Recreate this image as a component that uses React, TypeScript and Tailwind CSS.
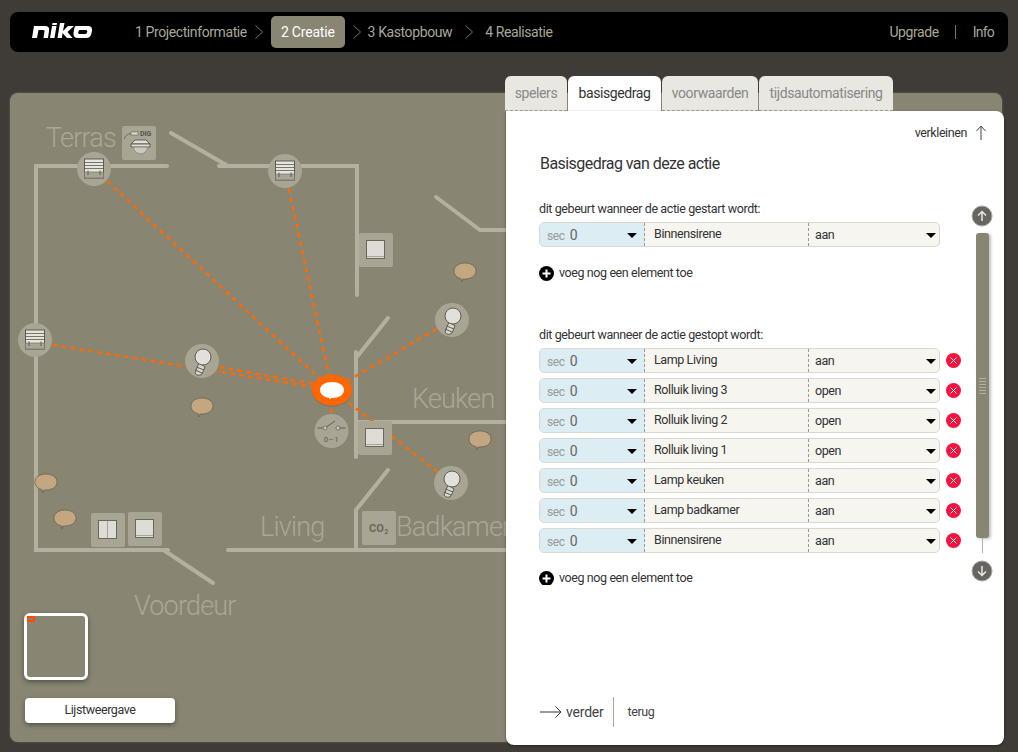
const FONT = "font-['Roboto',sans-serif]";

const WALLS = [
  "M36 350V166H167",
  "M171 133L228 166",
  "M219 166H357V295",
  "M36 340V550H168",
  "M165 551L213 583",
  "M356 457V352",
  "M356 358L388 318",
  "M356 422H506",
  "M356 550V510L388 470",
  "M228 550H506",
  "M436 197L480 230H506",
];

const LINKS = [
  [94, 169, 332, 390],
  [285, 171, 332, 390],
  [35, 342, 332, 390],
  [202, 364, 332, 387],
  [452, 320, 332, 390],
  [331, 431, 332, 390],
  [452, 483, 332, 390],
];

const BUBBLES = [
  [465, 271],
  [202, 406],
  [46, 482],
  [65, 518],
  [480, 439],
];

const LABELS = [
  { text: "Terras", cls: "left-[36px] top-[27px]" },
  { text: "Keuken", cls: "left-[402px] top-[288px]" },
  { text: "Living", cls: "left-[250px] top-[416px]" },
  { text: "Badkamer", cls: "left-[386px] top-[416px]" },
  { text: "Voordeur", cls: "left-[124px] top-[495px]" },
];

const STOP_ROWS = [
  ["Lamp Living", "aan"],
  ["Rolluik living 3", "open"],
  ["Rolluik living 2", "open"],
  ["Rolluik living 1", "open"],
  ["Lamp keuken", "aan"],
  ["Lamp badkamer", "aan"],
  ["Binnensirene", "aan"],
];

function Shutter({ x, y }: { x: number; y: number }) {
  return (
    <g transform={`translate(${x} ${y})`}>
      <circle r="17" fill="#a8a595" />
      <rect x="-9.5" y="-10" width="19" height="19" fill="#e6e4de" stroke="#5f5c50" />
      <rect x="-9.5" y="3" width="19" height="6" fill="#a8a595" stroke="#77746a" strokeWidth="0.7" />
      <path d="M-9 -6.5H9M-9 -3.5H9M-9 -0.5H9" stroke="#77746a" />
      <path d="M-6 1.5V6M6 1.5V6" stroke="#5f5c50" />
    </g>
  );
}

function Bulb({ x, y }: { x: number; y: number }) {
  return (
    <g transform={`translate(${x} ${y})`}>
      <circle r="17" fill="#a8a595" />
      <path d="M-3 2L-7 12Q-4 16 0 13L3 6Z" fill="#d9d7d0" stroke="#5f5c50" />
      <path d="M-5.5 6L2 9M-7 9L0 12" stroke="#5f5c50" />
      <circle cx="1" cy="-4" r="8" fill="#e2e0da" stroke="#5f5c50" />
    </g>
  );
}

function Tile({ x, y, split, children }: { x: number; y: number; split?: boolean; children?: React.ReactNode }) {
  return (
    <g transform={`translate(${x} ${y})`}>
      <rect width="34" height="34" rx="2" fill="#a8a595" />
      {children ?? (
        <>
          <rect x="7.5" y="7.5" width="18" height="18" fill="#dedcd6" stroke="#6a675b" />
          {split ? (
            <path d="M16.5 8V25" stroke="#a8a595" />
          ) : (
            <path d="M8 23.5H25" stroke="#a8a595" />
          )}
        </>
      )}
    </g>
  );
}

function Bubble({ x, y }: { x: number; y: number }) {
  return (
    <g transform={`translate(${x} ${y})`}>
      <path
        d="M-11 0C-11 -5 -6 -8 0 -8C6 -8 11 -5 11 0C11 5 6 8 0 8L-2 8L-3 11L-4 7.5C-8 7 -11 4 -11 0Z"
        fill="#c4a781"
        stroke="#6b6352"
        strokeWidth="0.8"
      />
    </g>
  );
}

function FloorPlan() {
  return (
    <svg className="absolute left-0 top-0" width="992" height="649" viewBox="10 93 992 649">
      <g fill="none" stroke="#b3b09f" strokeWidth="4" strokeLinecap="round">
        {WALLS.map((d) => (
          <path key={d} d={d} />
        ))}
      </g>
      <g stroke="#ff6a00" strokeWidth="2.500" strokeDasharray="4.5 4.5">
        {LINKS.map(([x1, y1, x2, y2]) => (
          <line key={`${x1}-${y1}`} x1={x1} y1={y1} x2={x2} y2={y2} />
        ))}
      </g>
      <Shutter x={94} y={169} />
      <Shutter x={285} y={171} />
      <Shutter x={35} y={340} />
      <Bulb x={202} y={361} />
      <Bulb x={452} y={320} />
      <Bulb x={451} y={483} />
      <Tile x={122} y={126}>
        <path d="M2 13Q4 8 9 7.500" fill="none" stroke="#5f5c50" strokeWidth="0.8" />
        <rect x="9" y="6" width="7" height="3" fill="#dedcd6" stroke="#5f5c50" strokeWidth="0.6" />
        <text x="18" y="10" fontSize="7" fontWeight="700" letterSpacing="0" fill="#55524a" fontFamily="Roboto, sans-serif">
          DIG
        </text>
        <path d="M9 18L13 14H24L28 18Z" fill="#e2e0da" stroke="#5f5c50" />
        <path d="M9 18H28V21H9Z" fill="#e2e0da" stroke="#5f5c50" />
        <path d="M11.500 21A7 7 0 0 0 25.500 21Z" fill="#c9c7bf" stroke="#908d80" />
      </Tile>
      <Tile x={359} y={233} />
      <Tile x={358} y={421} />
      <Tile x={91} y={513} split />
      <Tile x={128} y={512} />
      <Tile x={362} y={511}>
        <text x="7" y="21" fontSize="11" fontWeight="700" letterSpacing="0" fill="#6a675b" fontFamily="Roboto, sans-serif">
          CO
        </text>
        <text x="22.500" y="23" fontSize="6.500" fontWeight="700" letterSpacing="0" fill="#6a675b" fontFamily="Roboto, sans-serif">
          2
        </text>
      </Tile>
      <g transform="translate(331.500 431)">
        <circle r="17" fill="#a8a595" />
        <path d="M-14 -3H-8M8 -3H14M-6 -3.500L3.500 -10" stroke="#5f5c50" />
        <circle cx="-6.500" cy="-3" r="2" fill="#c9c7bf" stroke="#5f5c50" strokeWidth="0.7" />
        <circle cx="6.500" cy="-3" r="2" fill="#c9c7bf" stroke="#5f5c50" strokeWidth="0.7" />
        <text x="0" y="11" textAnchor="middle" fontSize="8" letterSpacing="0.5" fill="#5f5c50" fontFamily="Roboto, sans-serif">
          0–1
        </text>
      </g>
      {BUBBLES.map(([x, y]) => (
        <Bubble key={`${x}-${y}`} x={x} y={y} />
      ))}
      <g transform="translate(332 390)">
        <ellipse cy="1" rx="20" ry="15.500" fill="#6b5a40" opacity="0.4" />
        <ellipse rx="20" ry="15.500" fill="#ff6600" />
        <path
          d="M-12 0C-12 -5 -7 -8 0 -8C7 -8 12 -5 12 0C12 5 7 8 0 8L-1 8L-2 9.500L-3 7.800C-8 7.500 -12 4 -12 0Z"
          fill="#fff"
        />
      </g>
    </svg>
  );
}

function Caret() {
  return <span className="h-0 w-0 border-x-[5px] border-t-[5px] border-x-transparent border-t-black" />;
}

function ActionRow({ name, state, remove }: { name: string; state: string; remove?: boolean }) {
  return (
    <div className="flex items-center gap-[6px]">
      <div className="flex h-[25px] w-[401px] overflow-hidden rounded-[5px] border border-[#d9d8d0] bg-[#f6f5f0]">
        <div className="flex w-[105px] shrink-0 items-center border-r border-dashed border-r-[#9a9a90] bg-[#dcedf3] px-[7px] pt-[2px]">
          <span className="text-[12px] text-[#9a9a98]">sec</span>
          <span className="ml-[5px] text-[14px] text-[#666]">0</span>
          <span className="ml-auto flex">
            <Caret />
          </span>
        </div>
        <div className="flex w-[164px] shrink-0 items-start border-r border-dashed border-r-[#9a9a90] pl-[9px] pt-[2px] text-[12.500px] leading-[17px] text-[#333]">
          {name}
        </div>
        <div className="flex flex-1 items-center pl-[6px] pr-[3px] pt-[2px] text-[12.500px] text-[#333]">
          {state}
          <span className="ml-auto flex">
            <Caret />
          </span>
        </div>
      </div>
      {remove && (
        <svg width="15" height="15" viewBox="0 0 15 15">
          <circle cx="7.500" cy="7.500" r="7.500" fill="#f5123c" />
          <path d="M4.500 4.500L10.500 10.500M10.500 4.500L4.500 10.500" stroke="#fff" />
        </svg>
      )}
    </div>
  );
}

function AddRow() {
  return (
    <div className="flex items-center gap-[5px] text-[12.500px] leading-[16px] text-[#333]">
      <svg width="15" height="15" viewBox="0 0 15 15">
        <circle cx="7.500" cy="7.500" r="7.500" fill="#000" />
        <path d="M7.500 3.500V11.500M3.500 7.500H11.500" stroke="#fff" strokeWidth="2" />
      </svg>
      voeg nog een element toe
    </div>
  );
}

function ScrollButton({ up }: { up?: boolean }) {
  return (
    <svg width="22" height="22" viewBox="0 0 22 22">
      <circle cx="11" cy="11" r="10" fill="#666560" stroke="#a8a8a4" />
      <path
        d={up ? "M11 16V7M7 10.500L11 6.500L15 10.500" : "M11 6V15M7 11.500L11 15.500L15 11.500"}
        fill="none"
        stroke="#e8e8e4"
        strokeWidth="1.500"
      />
    </svg>
  );
}

function Scrollbar() {
  return (
    <div className="flex w-[22px] flex-col items-center">
      <ScrollButton up />
      <div className="mt-[6px] flex h-[305px] w-[13px] flex-col items-center justify-center gap-[2px] rounded-[3px] bg-[#888572] shadow-[2px_1px_3px_rgba(0,0,0,0.25)]">
        {[0, 1, 2, 3, 4, 5].map((i) => (
          <span key={i} className="h-px w-[7px] bg-[#b3b09f]" />
        ))}
      </div>
      <div className="mb-[7px] h-[15px] w-px bg-[#b3b09f]" />
      <ScrollButton />
    </div>
  );
}

function Tab({ label, active, cls }: { label: string; active?: boolean; cls: string }) {
  return (
    <div
      className={
        active
          ? `flex h-[35px] items-center justify-center rounded-t-[6px] bg-white text-[14px] text-[#333] ${cls}`
          : `flex h-[35px] items-center justify-center rounded-t-[6px] border-b border-dashed border-b-[#a5a59a] bg-[#e9e7e1] text-[14px] text-[#888] ${cls}`
      }
    >
      {label}
    </div>
  );
}

function DetailPanel() {
  return (
    <div className="absolute left-[496px] top-[-17px] flex w-[498px] flex-col">
      <div className="-ml-px flex gap-px">
        <Tab label="spelers" cls="w-[62px]" />
        <Tab label="basisgedrag" active cls="w-[93px]" />
        <Tab label="voorwaarden" cls="w-[96px]" />
        <Tab label="tijdsautomatisering" cls="w-[134px]" />
      </div>
      <div className="flex h-[634px] flex-col rounded-b-[8px] rounded-tr-[8px] bg-white shadow-[0_1px_3px_rgba(0,0,0,0.4)]">
        <div className="flex items-center justify-end gap-[8px] pr-[17px] pt-[14px] text-[12.500px] leading-[15px] text-[#333]">
          verkleinen
          <svg width="12" height="15" viewBox="0 0 12 15">
            <path d="M6 15V1M1.500 6L6 1L10.500 6" fill="none" stroke="#444" />
          </svg>
        </div>
        <h2 className="ml-[34px] mt-[14px] text-[16px] font-normal leading-[20px] tracking-[-0.55px] text-[#333]">
          Basisgedrag van deze actie
        </h2>
        <div className="mt-[27px] flex items-start">
          <div className="ml-[33px] h-[384px] w-[430px] overflow-hidden">
            <div className="mb-[6px] text-[12.500px] leading-[15px] text-[#333]">
              dit gebeurt wanneer de actie gestart wordt:
            </div>
            <ActionRow name="Binnensirene" state="aan" />
            <div className="mt-[18px]">
              <AddRow />
            </div>
            <div className="mb-[6px] mt-[46px] text-[12.500px] leading-[15px] text-[#333]">
              dit gebeurt wanneer de actie gestopt wordt:
            </div>
            <div className="flex flex-col gap-[5px]">
              {STOP_ROWS.map(([name, state]) => (
                <ActionRow key={name} name={name} state={state} remove />
              ))}
            </div>
            <div className="mt-[17px]">
              <AddRow />
            </div>
          </div>
          <div className="ml-[2px] mt-[4px]">
            <Scrollbar />
          </div>
        </div>
        <div className="mb-[18px] ml-[34px] mt-auto flex h-[30px] items-center text-[#444]">
          <svg width="22" height="14" viewBox="0 0 22 14">
            <path d="M0 7H21M15.500 1.500L21 7L15.500 12.500" fill="none" stroke="#333" />
          </svg>
          <span className="ml-[4px] text-[14px] tracking-[-0.2px]">verder</span>
          <span className="ml-[9px] h-[30px] w-px bg-[#aaa79a]" />
          <span className="ml-[14px] text-[12.500px]">terug</span>
        </div>
      </div>
    </div>
  );
}

function Chevron({ cls }: { cls: string }) {
  return (
    <svg width="8" height="14" viewBox="0 0 8 14" className={cls}>
      <path d="M0.500 0.500L7.500 7L0.500 13.500" fill="none" stroke="#77746a" />
    </svg>
  );
}

export default function App() {
  return (
    <div className={`h-[752px] w-[1018px] overflow-hidden bg-[#3f3b36] px-[10px] pt-[12px] tracking-[-0.4px] ${FONT}`}>
      <nav className="flex h-[40px] items-center rounded-[8px] bg-black pl-[22px] pr-[14px] text-[14px] text-[#a9a69a]">
        <svg width="61" height="15" viewBox="0 0 61 15" className="mb-[3px] mr-[42px]">
          <path
            fill="#fff"
            fillRule="evenodd"
            d="M0 15L2 3H13Q18 3 17 8L16 15H11.500L12.500 8Q12.500 7 11 7H6.500L5 15Z
               M18 15L20 3H24.500L22.500 15Z
               M20.500 0H25L24.700 2H20.200Z
               M25.500 15L28 0H32.500L31 8L36 3H42L35.500 9L40.500 15H35L30.500 10L29.900 15Z
               M44 3H56Q60.500 3 60 8L59.500 10Q59 15 54 15H46Q41 15 41.500 10L42 7Q42.500 3 44 3Z
               M47.500 7Q46.700 7 46.500 8.500L46.200 9.500Q46 11 47.500 11H53Q54.700 11 55 9.500L55.300 8.500Q55.500 7 54 7Z"
          />
        </svg>
        <span>1 Projectinformatie</span>
        <Chevron cls="ml-[8px] mr-[8px]" />
        <span className="rounded-[5px] bg-[#888572] px-[10px] py-[5.500px] tracking-[-0.2px] text-white">2 Creatie</span>
        <Chevron cls="ml-[8px] mr-[7px]" />
        <span>3 Kastopbouw</span>
        <Chevron cls="ml-[13px] mr-[12px]" />
        <span>4 Realisatie</span>
        <span className="ml-auto">Upgrade</span>
        <span className="ml-[16px] mr-[17px] h-[14px] w-px bg-[#77746a]" />
        <span className="tracking-[-0.8px]">Info</span>
      </nav>
      <main className="relative mt-[41px] h-[649px] w-[992px] rounded-[8px] bg-[#888572] shadow-[0_0_2px_rgba(255,255,255,0.3)]">
        <FloorPlan />
        {LABELS.map((l) => (
          <span key={l.text} className={`absolute text-[27px] font-light leading-[36px] tracking-[-0.8px] text-[#aaa796] ${l.cls}`}>
            {l.text}
          </span>
        ))}
        <div className="absolute left-[14px] top-[520px] h-[67px] w-[64px] rounded-[6px] border-[3px] border-white shadow-[0_2px_5px_rgba(0,0,0,0.4)]">
          <span className="absolute left-0 top-0 h-[6px] w-[8px] border-2 border-[#ff4a00]" />
        </div>
        <button className="absolute left-[15px] top-[605px] h-[25px] w-[150px] rounded-[4px] bg-white text-[12.500px] text-[#333] shadow-[0_2px_5px_rgba(0,0,0,0.4)]">
          Lijstweergave
        </button>
        <DetailPanel />
      </main>
    </div>
  );
}
